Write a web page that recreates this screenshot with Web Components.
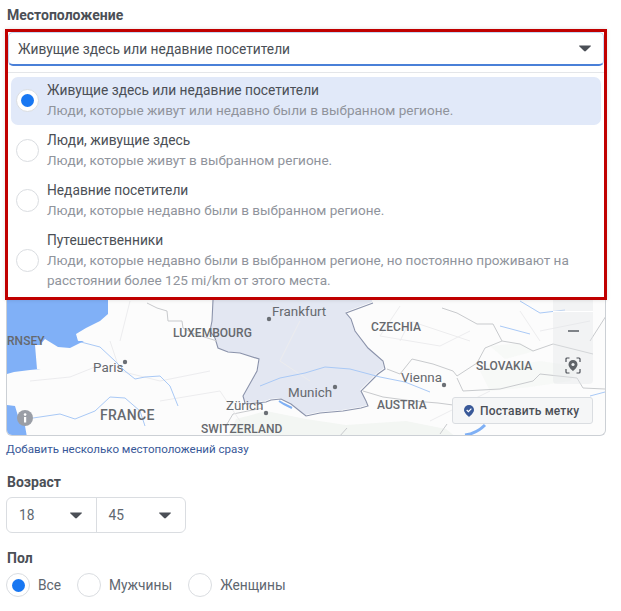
<!DOCTYPE html>
<html lang="ru">
<head>
<meta charset="utf-8">
<title>Местоположение</title>
<style>
  html, body { margin: 0; background: #fff; }
  body { font-family: Roboto, "Liberation Sans", sans-serif; font-size: 13.75px; color: #4b4f56; }
</style>
</head>
<body>
<audience-form>
  <form-label>Местоположение</form-label>
  <location-picker>
    <picker-option title="Живущие здесь или недавние посетители" selected>Люди, которые живут или недавно были в выбранном регионе.</picker-option>
    <picker-option title="Люди, живущие здесь">Люди, которые живут в выбранном регионе.</picker-option>
    <picker-option title="Недавние посетители">Люди, которые недавно были в выбранном регионе.</picker-option>
    <picker-option title="Путешественники">Люди, которые недавно были в выбранном регионе, но постоянно проживают на расстоянии более 125 mi/km от этого места.</picker-option>
  </location-picker>
  <map-preview></map-preview>
  <bulk-link>Добавить несколько местоположений сразу</bulk-link>
  <form-label style="margin-top:16px">Возраст</form-label>
  <age-range from="18" to="45"></age-range>
  <form-label style="margin-top:16px">Пол</form-label>
  <gender-row>
    <radio-dot selected>Все</radio-dot>
    <radio-dot>Мужчины</radio-dot>
    <radio-dot>Женщины</radio-dot>
  </gender-row>
</audience-form>

<script>
const ARROW = `<svg width="12" height="7" viewBox="0 0 12 7"><path d="M.5.5h11a.4.4 0 0 1 .3.7L6.9 6a1.3 1.3 0 0 1-1.8 0L.2 1.2A.4.4 0 0 1 .5.5z" fill="#4b4f56"/></svg>`;

class AudienceForm extends HTMLElement {
  constructor() {
    super();
    this.attachShadow({ mode: "open" });
    this.shadowRoot.innerHTML = `
      <style>
        :host { display: flex; flex-direction: column; width: 621px; height: 611px; box-sizing: border-box; padding: 6px 15px 0 6px; overflow: hidden; }
      </style>
      <slot></slot>
    `;
  }
}

class FormLabel extends HTMLElement {
  constructor() {
    super();
    this.attachShadow({ mode: "open" });
    this.shadowRoot.innerHTML = `
      <style>
        :host { display: block; font-size: 14px; font-weight: 700; line-height: 18px; color: #4b4f56; padding-left: 1px; }
      </style>
      <slot></slot>
    `;
  }
}

class LocationPicker extends HTMLElement {
  constructor() {
    super();
    this.attachShadow({ mode: "open" });
    this.shadowRoot.innerHTML = `
      <style>
        :host { display: block; margin: 5px -1px 0 -1px; box-sizing: border-box; height: 271px; border: 3px solid #c00000; box-shadow: 0 0 4px rgba(0,0,0,.12); background: #fff; position: relative; z-index: 2; }
        .select { display: flex; align-items: center; justify-content: space-between; height: 34px; box-sizing: border-box; padding: 0 12px 0 9px; border: 1px solid #c4d6f3; border-bottom: 2px solid #4a80d8; border-radius: 5px; line-height: 20px; }
        .menu { margin-top: 6px; border-top: 1px solid #e4e6e9; padding: 4px 3px 0 3px; display: flex; flex-direction: column; }
      </style>
      <div class="select"><span>Живущие здесь или недавние посетители</span>${ARROW}</div>
      <div class="menu"><slot></slot></div>
    `;
  }
}

class PickerOption extends HTMLElement {
  constructor() {
    super();
    this.attachShadow({ mode: "open" });
    const on = this.hasAttribute("selected");
    this.shadowRoot.innerHTML = `
      <style>
        :host { display: block; }
        .row { display: flex; align-items: center; gap: 8px; padding: 3px 5px 5px 5px; margin-bottom: 2px; border-radius: 7px; ${on ? "background: #e1e9f9;" : ""} }
        .dot { flex: none; width: 23px; height: 23px; box-sizing: border-box; border-radius: 50%; border: 1px solid #dadde1; background: #fff; display: flex; align-items: center; justify-content: center; }
        .dot i { width: 13px; height: 13px; border-radius: 50%; background: #1877f2; }
        .title { line-height: 20px; color: #4b4f56; }
        .sub { line-height: 20px; font-size: 13.55px; color: #90949c; }
      </style>
      <div class="row">
        <div class="dot">${on ? "<i></i>" : ""}</div>
        <div>
          <div class="title">${this.getAttribute("title")}</div>
          <div class="sub"><slot></slot></div>
        </div>
      </div>
    `;
  }
}

class MapPreview extends HTMLElement {
  constructor() {
    super();
    this.attachShadow({ mode: "open" });
    const labels = [
      ["RNSEY", 7, 340, "c"], ["LUXEMBOURG", 173, 332, "c"], ["CZECHIA", 371, 326, "c"],
      ["SLOVAKIA", 476, 365, "c"], ["AUSTRIA", 377, 404, "c"], ["SWITZERLAND", 201, 428, "c"],
      ["FRANCE", 100, 414, "f"], ["Frankfurt", 272, 311, "t"], ["Paris", 93, 367, "t"],
      ["Zürich", 226, 405, "t"], ["Munich", 288, 392, "t"], ["Vienna", 401, 377, "t"]
    ].map(l => `<span class="${l[3]}" style="left:${l[1] - 7}px;top:${l[2] - 299}px">${l[0]}</span>`).join("");
    this.shadowRoot.innerHTML = `
      <style>
        :host { display: block; position: relative; height: 136px; box-sizing: border-box; border: 1px solid #ccd0d5; border-top: 0; border-radius: 0 0 6px 6px; overflow: hidden; background: #fcfcfc; }
        svg.base { position: absolute; left: -7px; top: -299px; }
        span { position: absolute; transform: translateY(-50%); white-space: nowrap; color: #66696e; line-height: 16px; }
        .c { font-size: 12px; font-weight: 500; letter-spacing: .05px; }
        .f { font-size: 14px; font-weight: 500; letter-spacing: .3px; }
        .t { font-size: 13.4px; }
        .zoom { position: absolute; left: 546px; top: 0; width: 40px; height: 84px; background: rgba(228,230,233,.4); border-radius: 0 0 4px 4px; }
        .zoom::before { content: ""; position: absolute; left: 0; right: 0; top: 11px; height: 1px; background: #fff; }
        .minus { position: absolute; left: 15px; top: 30px; width: 11px; height: 2px; background: #7f8388; }
        .pin { position: absolute; left: 12px; top: 57px; }
        .mark { position: absolute; left: 445px; top: 97px; width: 141px; height: 27px; box-sizing: border-box; background: #f5f6f7; border: 1px solid #dadde1; border-radius: 3px; display: flex; align-items: center; gap: 6px; padding-left: 11px; font-size: 12px; font-weight: 500; color: #4b4f56; letter-spacing: .15px; }
        .info { position: absolute; left: 10px; top: 110px; width: 16px; height: 16px; }
      </style>
      <svg class="base" width="621" height="436" viewBox="0 0 621 436">
        <g fill="#f3f6f3">
          <path d="M228 436l8-18 30-8 40 8 40 6 60-4 40 8 10 8z"/>
          <path d="M480 370l60-10 40 6-10 14-40 6-40 4z" opacity=".6"/>
          <path d="M490 345l30-3 15 8-30 8z" opacity=".6"/>
        </g>
        <path d="M213 299l-1 21-2 10 5 7 3 10 10 4 12 1 19 6-2 12-14 25 2 7 20-2 5-2 10-1 10 5 10 8 5 4 14-3 23-2 18-3 7-2-2-5-5-10 17-17 7-5-2-8-15-13-13-17-4-12-5-6 27-10v-3z" fill="#e3e7f2"/>
        <path d="M213 299l-1 21-2 10 5 7 3 10 10 4 12 1 19 6-2 12-14 25 2 7" fill="none" stroke="#8b93ab" stroke-width="1.1"/>
        <path d="M246 403l20-2 5-2 10-1 10 5 10 8 5 4 14-3 23-2 18-3 7-2-2-5-5-10 17-17 7-5-2-8-15-13-13-17-4-12-5-6 27-10" fill="none" stroke="#8b93ab" stroke-width="1.1"/>
        <g fill="none" stroke="#c8cacd" stroke-width="1">
          <path d="M147 302l10 5 10 3 1 10h14l1 7 12 6 22 7"/>
          <path d="M387 368l13 5 12-15 21 5 20 7 4 5 20-13 8-15 17-7 18 3 13 7 20-7 40 10"/>
          <path d="M457 377l6 13 37-2 33-8 7-7 37 4 6 10 22 1"/>
          <path d="M442 307l15 5 20 11h16l9 17"/>
          <path d="M363 390l20 6 30 4 25 2 15 2"/>
          <path d="M447 423l-7 10M347 427l-8 9M227 423l6-10 30-6"/>
          <path d="M606 315l-16 25"/>
        </g>
        <g fill="none" stroke="#ececee" stroke-width="1">
          <path d="M30 380l40-4 30-12M110 340l10 30 40 10 50-10M130 300l-10 40M160 400l60-10 20 30M400 305l-20 30 60 10 30-15M400 340l10-20 60 20M300 320l-20 40 30 20M520 310l20 30M540 330l50-10M430 420l60-30"/>
        </g>
        <g fill="none" stroke="#a9c9f6" stroke-width="1">
          <path d="M77 340l23 6 15 14 10 10 10 8 10-2 15-1 10 10 8 20"/>
          <path d="M33 417l27-4 15 5 20-8 15-14 15 1 15 13 5 15"/>
          <path d="M260 385l20-8 25-5 20-6 25 2 30 8 25 5 25 10"/>
          <path d="M520 300l20 12 25-3M500 325l30 8M590 395l15-4"/>
        </g>
        <path d="M279 400l5 3 8 4" fill="none" stroke="#7fb0f5" stroke-width="2"/>
        <path d="M465 434c8-1 15-5 20-10" fill="none" stroke="#7fb0f5" stroke-width="3"/>
        <path d="M7 299h101v14l-8 7-14 7-10 6 2 7h6l-14 7-12-1-13-8-5 6h-5l2 24h4l-11 1-16 2-7 2z" fill="#80b0f7"/>
        <path d="M7 404l8 1 3 10 7 10 2 11H7z" fill="#80b0f7"/>
        <g fill="#6b6f75">
          <circle cx="269" cy="318" r="2.2"/><circle cx="125" cy="361" r="2.2"/><circle cx="266" cy="412" r="2.2"/><circle cx="335" cy="386" r="2.2"/><circle cx="444" cy="384" r="2.2"/>
        </g>
      </svg>
      ${labels}
      <svg class="info" viewBox="0 0 16 16"><circle cx="8" cy="8" r="8" fill="#9a9ea6"/><rect x="7" y="7" width="2.2" height="5.5" fill="#fff"/><circle cx="8.1" cy="4.6" r="1.3" fill="#fff"/></svg>
      <div class="zoom">
        <div class="minus"></div>
        <svg class="pin" width="16" height="17" viewBox="0 0 16 17">
          <path d="M1 5V2a1 1 0 0 1 1-1h2.500M11.500 1H14a1 1 0 0 1 1 1v3M15 12v3a1 1 0 0 1-1 1h-2.500M4.500 16H2a1 1 0 0 1-1-1v-3" fill="none" stroke="#4b4f56" stroke-width="1.200"/>
          <path d="M8 3a4.500 4.500 0 0 0-4.500 4.500C3.500 10.500 8 14 8 14s4.500-3.500 4.500-6.500A4.500 4.500 0 0 0 8 3z" fill="#5f6368"/>
          <circle cx="8" cy="7.500" r="1.600" fill="#eef0f2"/>
        </svg>
      </div>
      <div class="mark">
        <svg width="10" height="12" viewBox="0 0 10 12"><path d="M5 0a5 5 0 0 0-5 5c0 3 5 7 5 7s5-4 5-7a5 5 0 0 0-5-5z" fill="#385898"/><path d="M2.700 5l1.700 1.700 3-3" fill="none" stroke="#fff" stroke-width="1.200"/></svg>
        <span style="position:static;transform:none;color:inherit">Поставить метку</span>
      </div>
    `;
  }
}

class BulkLink extends HTMLElement {
  constructor() {
    super();
    this.attachShadow({ mode: "open" });
    this.shadowRoot.innerHTML = `
      <style>
        :host { display: block; margin-top: 5px; font-size: 11.55px; line-height: 16px; color: #385898; cursor: pointer; }
      </style>
      <slot></slot>
    `;
  }
}

class AgeRange extends HTMLElement {
  constructor() {
    super();
    this.attachShadow({ mode: "open" });
    this.shadowRoot.innerHTML = `
      <style>
        :host { display: flex; width: 180px; height: 36px; margin-top: 6px; box-sizing: border-box; border: 1px solid #dadde1; border-radius: 6px; color: #606770; }
        div { flex: 1; display: flex; align-items: center; justify-content: space-between; padding: 0 14px 0 12px; }
        div + div { border-left: 1px solid #dadde1; }
      </style>
      <div><span>${this.getAttribute("from")}</span>${ARROW}</div>
      <div><span>${this.getAttribute("to")}</span>${ARROW}</div>
    `;
  }
}

class GenderRow extends HTMLElement {
  constructor() {
    super();
    this.attachShadow({ mode: "open" });
    this.shadowRoot.innerHTML = `
      <style>
        :host { display: flex; gap: 16px; margin-top: 6px; font-size: 13.75px; }
      </style>
      <slot></slot>
    `;
  }
}

class RadioDot extends HTMLElement {
  constructor() {
    super();
    this.attachShadow({ mode: "open" });
    const on = this.hasAttribute("selected");
    this.shadowRoot.innerHTML = `
      <style>
        :host { display: flex; align-items: center; gap: 8px; line-height: 24px; color: #606770; }
        .dot { width: 24px; height: 24px; box-sizing: border-box; border-radius: 50%; border: 1px solid #dadde1; display: flex; align-items: center; justify-content: center; }
        .dot i { width: 13px; height: 13px; border-radius: 50%; background: #1877f2; }
      </style>
      <div class="dot">${on ? "<i></i>" : ""}</div>
      <slot></slot>
    `;
  }
}

customElements.define("audience-form", AudienceForm);
customElements.define("form-label", FormLabel);
customElements.define("location-picker", LocationPicker);
customElements.define("picker-option", PickerOption);
customElements.define("map-preview", MapPreview);
customElements.define("bulk-link", BulkLink);
customElements.define("age-range", AgeRange);
customElements.define("gender-row", GenderRow);
customElements.define("radio-dot", RadioDot);
</script>
</body>
</html>
